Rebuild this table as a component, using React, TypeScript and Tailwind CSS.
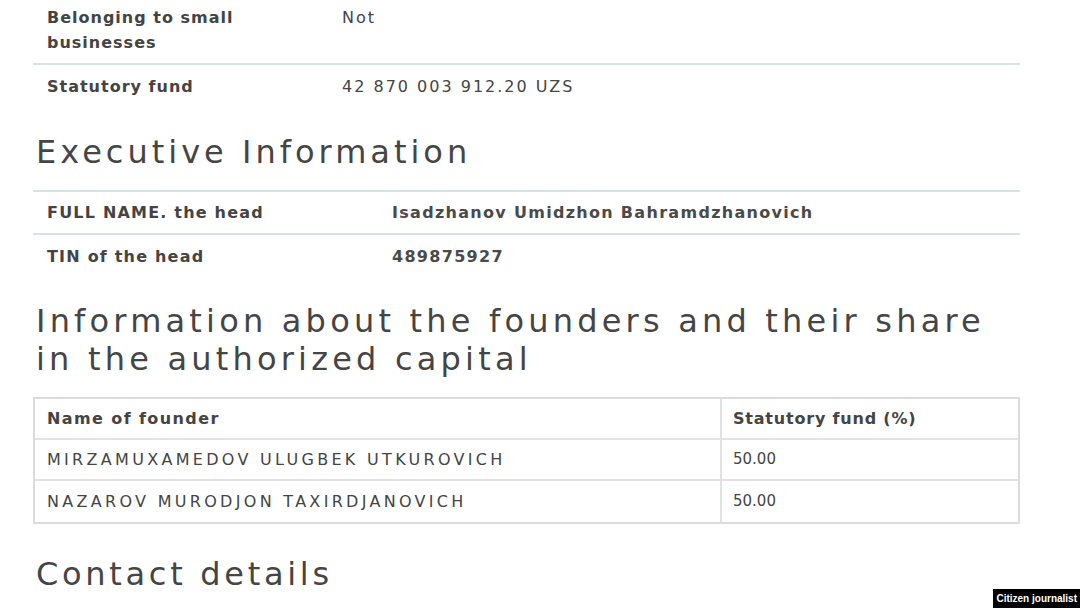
const topRows = [
  { label: ["Belonging to small", "businesses"], value: "Not" },
  { label: ["Statutory fund"], value: "42 870 003 912.20 UZS" },
];

const headRows = [
  { label: "FULL NAME. the head", value: "Isadzhanov Umidzhon Bahramdzhanovich" },
  { label: "TIN of the head", value: "489875927" },
];

const founders = [
  { name: "MIRZAMUXAMEDOV ULUGBEK UTKUROVICH", share: "50.00" },
  { name: "NAZAROV MURODJON TAXIRDJANOVICH", share: "50.00" },
];

export default function App() {
  return (
    <div
      className="relative w-[1080px] h-[608px] overflow-hidden bg-white text-[#333]"
      style={{ fontFamily: '"DejaVu Sans", "Open Sans", sans-serif' }}
    >
      <div className="pl-[33px] w-[1020px]">
        {/* company rows */}
        <div>
          {topRows.map((r, i) => (
            <div
              key={i}
              className={
                "flex text-[16px] leading-[25px] " +
                (i === 0 ? "pt-[5px] pb-[8px] border-b-2 border-[#d5e2ea]" : "py-[9px]")
              }
            >
              <div className="w-[309px] pl-[14px] font-semibold text-[#444] tracking-[1px]">
                {r.label.map((l) => (
                  <div key={l}>{l}</div>
                ))}
              </div>
              <div className="text-[#444] tracking-[2px]">{r.value}</div>
            </div>
          ))}
        </div>

        <h2 className="pl-[3px] mt-[22px] text-[32px] leading-[44px] text-[#454545] tracking-[4px]">
          Executive Information
        </h2>

        <div className="mt-[16px] border-t-2 border-[#d5e2ea]">
          {headRows.map((r, i) => (
            <div
              key={i}
              className={
                "flex h-[43px] items-center text-[16px] " +
                (i === 0 ? "border-b-2 border-[#d5e2ea]" : "")
              }
            >
              <div className="w-[359px] pl-[14px] font-semibold text-[#444] tracking-[1.2px]">{r.label}</div>
              <div className="font-semibold text-[#4a4a4a] tracking-[1.3px]">{r.value}</div>
            </div>
          ))}
        </div>

        <h2 className="pl-[3px] mt-[24px] text-[32px] leading-[38px] text-[#454545] tracking-[4.2px]">
          Information about the founders and their share
          <br />
          in the authorized capital
        </h2>

        <div className="mt-[19px] border-2 border-[#dcdcdc]">
          <div className="flex h-[41px] border-b-2 border-[#e2e2e2] text-[16px]">
            <div className="w-[687px] pl-[12px] flex items-center border-r-2 border-[#e2e2e2] font-semibold text-[#444] tracking-[1.4px]">
              Name of founder
            </div>
            <div className="flex-1 pl-[11px] flex items-center font-semibold text-[#444] tracking-[0.8px]">
              Statutory fund (%)
            </div>
          </div>
          {founders.map((f, i) => (
            <div
              key={i}
              className={
                "flex h-[41px] text-[16px] " + (i === 0 ? "border-b-2 border-[#e2e2e2]" : "")
              }
            >
              <div className="w-[687px] pl-[12px] flex items-center border-r-2 border-[#e2e2e2] text-[#444] tracking-[3.3px]">
                {f.name}
              </div>
              <div className="flex-1 pl-[11px] flex items-center text-[#444] text-[15px]">{f.share}</div>
            </div>
          ))}
        </div>

        <h2 className="pl-[3px] mt-[28px] text-[32px] leading-[44px] text-[#454545] tracking-[3.7px]">
          Contact details
        </h2>
      </div>

      <div
        className="absolute right-0 bottom-0 bg-black text-white font-bold text-[10px] leading-[19px] px-[3px]"
        style={{ fontFamily: '"Liberation Sans", Arial, sans-serif' }}
      >
        Citizen journalist
      </div>
    </div>
  );
}
